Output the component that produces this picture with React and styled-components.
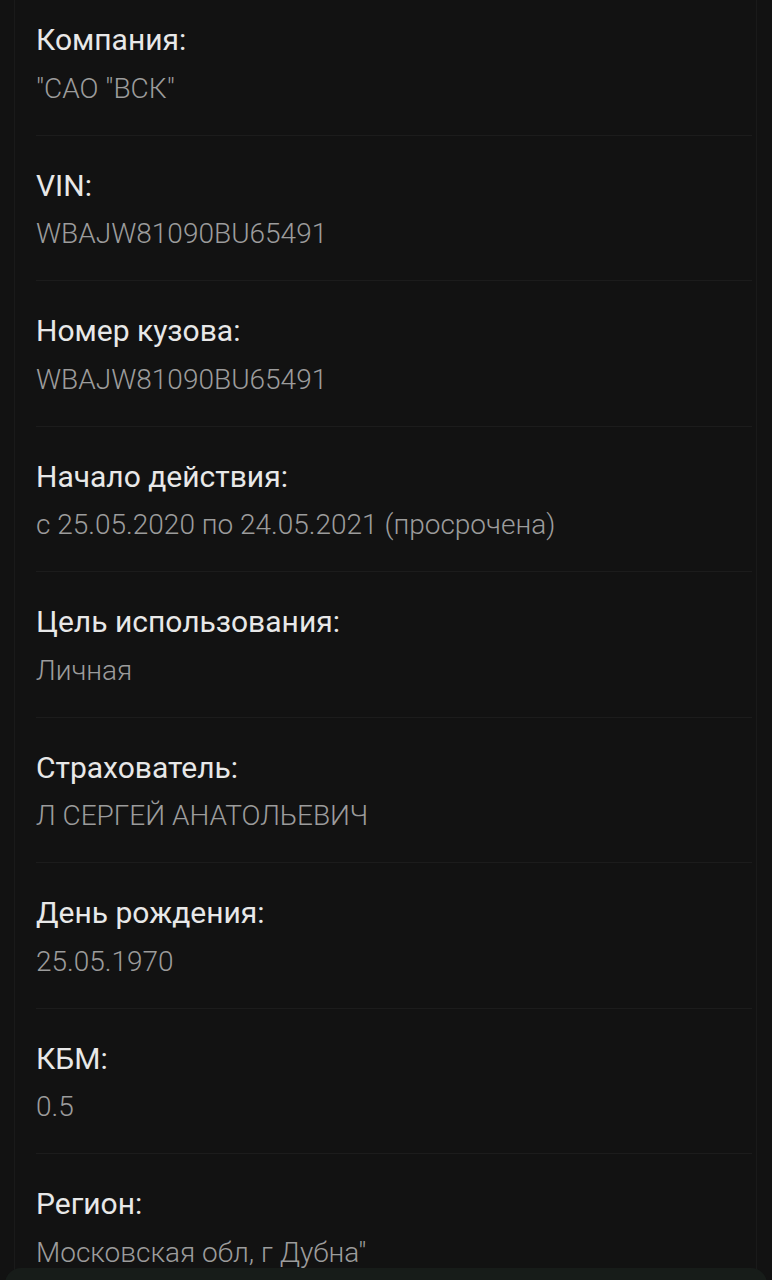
import React from 'react';
import styled, { createGlobalStyle } from 'styled-components';

const rows = [
  ['Компания:', '"САО "ВСК"'],
  ['VIN:', 'WBAJW81090BU65491'],
  ['Номер кузова:', 'WBAJW81090BU65491'],
  ['Начало действия:', 'с 25.05.2020 по 24.05.2021 (просрочена)'],
  ['Цель использования:', 'Личная'],
  ['Страхователь:', 'Л СЕРГЕЙ АНАТОЛЬЕВИЧ'],
  ['День рождения:', '25.05.1970'],
  ['КБМ:', '0.5'],
  ['Регион:', 'Московская обл, г Дубна"'],
];

const App = () => {
  return (
    <>
      <GlobalStyle />
      <Screen>
        <Panel>
          {rows.map(([label, value], i) => (
            <Row key={i} last={i === rows.length - 1}>
              <Label>{label}</Label>
              <Value>{value}</Value>
            </Row>
          ))}
        </Panel>
        <Sheet />
      </Screen>
    </>
  );
};

const GlobalStyle = createGlobalStyle`
  html, body {
    margin: 0;
    background: #121212;
  }
`;

const Screen = styled.div`
  /* the whole phone screen */
  min-height: 1280px;
  background: #121212;
  font-family: Roboto, "Noto Sans", sans-serif;
  overflow: hidden;
`;

const Panel = styled.div`
  margin: 0 15px 0 14px;
  border-left: 1px solid #1a1a1a;
  border-right: 1px solid #1a1a1a;
  padding: 0 4px 0 21px;
  height: 1280px;
`;

const Row = styled.div`
  display: flex;
  flex-direction: column;
  gap: 12.5px;
  padding: 32px 0 28px;
  border-bottom: 1px solid ${p => (p.last ? 'transparent' : '#1c1c1c')};

  &:first-child {
    padding-top: 22px;
  }
`;

const Label = styled.div`
  font-size: 30px;
  line-height: 36px;
  color: #e8e8e8;
  font-weight: 400;
`;

const Value = styled.div`
  font-size: 28px;
  line-height: 36px;
  color: #9c9c9c;
  font-weight: 300;
`;

const Sheet = styled.div`
  /* bottom sheet peeking over the list */
  position: fixed;
  left: 5px;
  right: 5px;
  bottom: -20px;
  height: 32px;
  border-radius: 16px 16px 0 0;
  background: #171c19;
`;

export default App;
